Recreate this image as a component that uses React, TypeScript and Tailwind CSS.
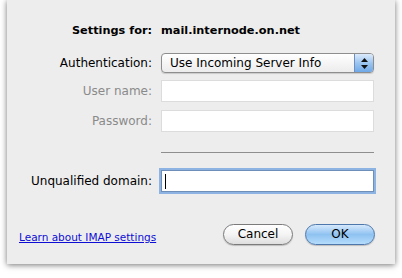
import React from 'react';

const font = { fontFamily: '"Lucida Grande", "DejaVu Sans", sans-serif' };

function Field({ label, disabled, focused }: { label: string; disabled?: boolean; focused?: boolean }) {
  return (
    <div className="flex items-center">
      <label
        className={`w-[146px] shrink-0 text-right pr-[1px] text-[12px] ${disabled ? 'text-[#8a8a8a]' : 'text-black'}`}
      >
        {label}
      </label>
      <div className="ml-[8px] w-[213px]">
        {focused ? (
          <div className="h-[22px] bg-white border border-[#6f8fb8] shadow-[0_0_0_2px_#8db3e2] flex items-center pl-[3px]">
            <span className="block w-[1px] h-[15px] bg-black" />
          </div>
        ) : (
          <div
            className={`h-[22px] bg-white border ${disabled ? 'border-[#dcdcdc]' : 'border-[#9a9a9a]'}`}
          />
        )}
      </div>
    </div>
  );
}

export default function App() {
  return (
    <div className="w-[402px] h-[278px] bg-white overflow-hidden" style={font}>
      <div className="mx-[7px] w-[388px] h-[264px] bg-[#ededed] shadow-[0_1px_6px_rgba(0,0,0,0.55)] flex flex-col">
        {/* Header */}
        <div className="mt-[23px] flex items-center h-[16px] text-[11.3px] font-bold text-black">
          <span className="w-[146px] text-right pr-[1px]">Settings for:</span>
          <span className="ml-[8px]">mail.internode.on.net</span>
        </div>

        {/* Authentication */}
        <div className="mt-[14px] flex items-center">
          <label className="w-[146px] text-right pr-[1px] text-[12px] text-black">Authentication:</label>
          <div className="ml-[8px] w-[213px] h-[20px] rounded-[4px] border border-[#8e8e8e] bg-gradient-to-b from-white to-[#ececec] flex items-stretch overflow-hidden shadow-[0_1px_1px_rgba(0,0,0,0.15)]">
            <span className="flex-1 pl-[8px] text-[12px] leading-[18px] text-black">Use Incoming Server Info</span>
            <span className="w-[19px] border-l border-[#6f8fbf] bg-gradient-to-b from-[#dcebfb] via-[#9cc5f0] to-[#6fa9e8] flex flex-col items-center justify-center gap-[3px]">
              <svg width="7" height="4" viewBox="0 0 7 4"><path d="M3.5 0L7 4H0z" fill="#111" /></svg>
              <svg width="7" height="4" viewBox="0 0 7 4"><path d="M0 0h7L3.5 4z" fill="#111" /></svg>
            </span>
          </div>
        </div>

        <div className="mt-[7px]">
          <Field label="User name:" disabled />
        </div>
        <div className="mt-[8px]">
          <Field label="Password:" disabled />
        </div>

        {/* Separator */}
        <div className="mt-[20px] ml-[154px] w-[213px] h-[1px] bg-[#8e8e8e]" />

        <div className="mt-[17px]">
          <Field label="Unqualified domain:" focused />
        </div>

        {/* Footer */}
        <div className="mt-[31px] flex items-center">
          <a
            href="#"
            className="ml-[12px] mt-[7px] text-[10.5px] text-[#0d0dd6] underline"
          >
            Learn about IMAP settings
          </a>
          <div className="ml-auto mr-[20px] flex gap-[12px]">
            <button className="w-[70px] h-[21px] rounded-full border border-[#7b7b7b] bg-gradient-to-b from-white via-[#f4f4f4] to-[#dedede] text-[12px] text-black shadow-[0_1px_1px_rgba(0,0,0,0.2)]">
              Cancel
            </button>
            <button className="w-[70px] h-[21px] rounded-full border border-[#4e78ac] bg-gradient-to-b from-[#d6e9fb] via-[#8fc2f1] to-[#b5dcfb] text-[12px] text-black shadow-[0_1px_1px_rgba(0,0,0,0.2)]">
              OK
            </button>
          </div>
        </div>
      </div>
    </div>
  );
}
